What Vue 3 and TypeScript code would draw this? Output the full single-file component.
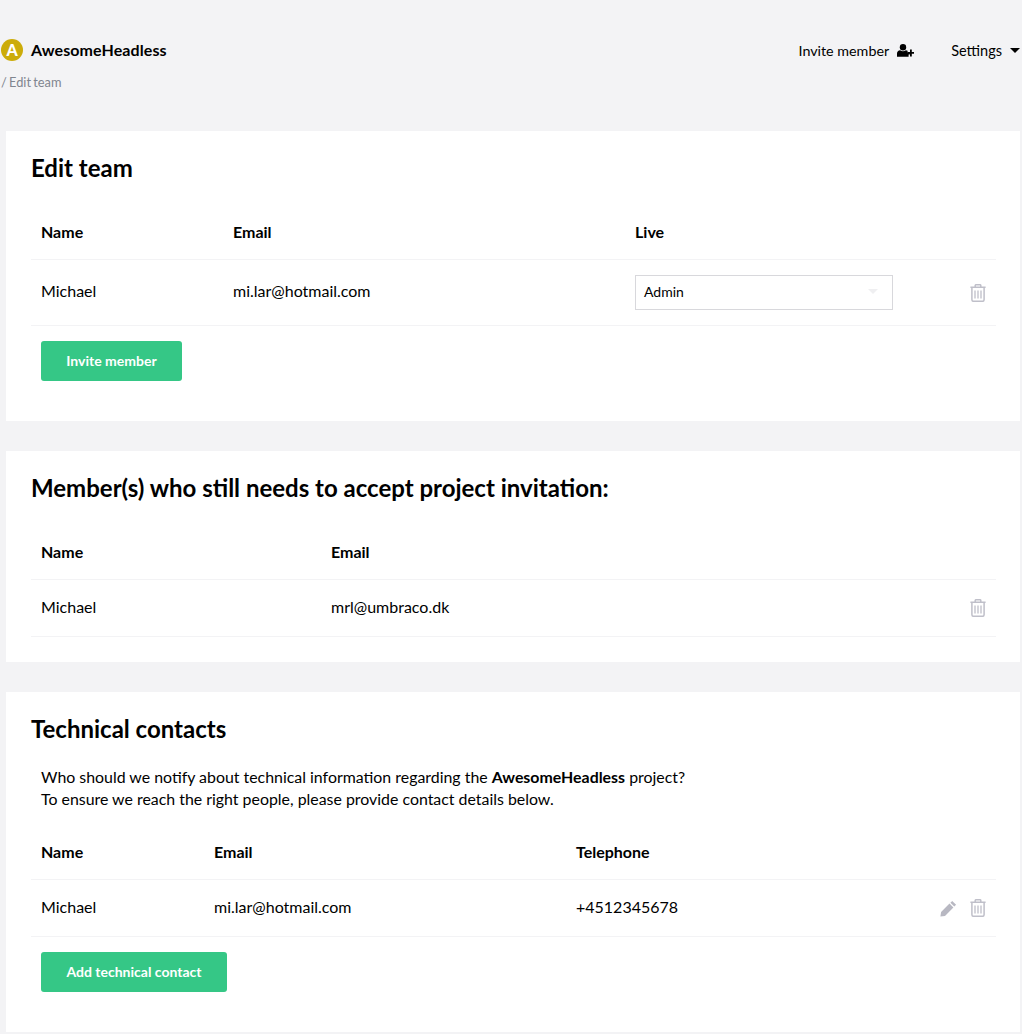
<script setup lang="ts">
const teamCols = '192px 402px 1fr 80px'
const inviteCols = '290px 1fr 80px'
const techCols = '173px 362px 1fr 80px'
</script>

<template>
  <div class="page">
    <header class="top">
      <div class="top-row">
        <div class="brand">
          <span class="logo">A</span>
          <span class="brand-name">AwesomeHeadless</span>
        </div>
        <nav class="nav">
          <span class="nav-item invite">
            Invite member
            <svg class="user-plus" width="17" height="13" viewBox="0 0 17 13">
              <circle cx="6" cy="3.300" r="3.200" fill="#000" />
              <path d="M0 12.800V9.600C0 7.600 1.400 6.200 3.100 6.200c.9.7 1.800 1 2.900 1s2-.3 2.900-1c.6 0 1.200.2 1.700.6v1.800h2.200v1.800h-1.200v2.400H1z" fill="#000" />
              <path d="M13 5.400h1.800v2.600H17v1.800h-2.200v2.600H13V9.800h-2.400V8H13z" fill="#000" />
            </svg>
          </span>
          <span class="nav-item settings">
            Settings
            <span class="caret"></span>
          </span>
        </nav>
      </div>
      <div class="crumb">/ Edit team</div>
    </header>

    <section class="card card-team">
      <h2>Edit team</h2>
      <div class="row head" :style="{ gridTemplateColumns: teamCols }">
        <span>Name</span><span>Email</span><span>Live</span><span></span>
      </div>
      <div class="row body tall" :style="{ gridTemplateColumns: teamCols }">
        <span>Michael</span>
        <span>mi.lar@hotmail.com</span>
        <div class="select"><span>Admin</span><i class="select-caret"></i></div>
        <div class="actions">
          <svg class="trash" width="16" height="18" viewBox="0 0 16 18">
            <path d="M5.200 3V1.600c0-.5.3-.9.9-.9h3.800c.6 0 .9.4.9.9V3M.4 3.300h15.200M1.900 3.500v11.900c0 1 .6 1.900 1.400 1.900h9.400c.8 0 1.400-.9 1.400-1.900V3.500" fill="none" stroke="#bfbfc9" stroke-width="1.500" />
            <path d="M5 6.500v8M8 6.500v8M11 6.500v8" fill="none" stroke="#bfbfc9" stroke-width="1.300" />
          </svg>
        </div>
      </div>
      <button class="btn invite-btn">Invite member</button>
    </section>

    <section class="card card-invite">
      <h2>Member(s) who still needs to accept project invitation:</h2>
      <div class="row head" :style="{ gridTemplateColumns: inviteCols }">
        <span>Name</span><span>Email</span><span></span>
      </div>
      <div class="row body" :style="{ gridTemplateColumns: inviteCols }">
        <span>Michael</span>
        <span>mrl@umbraco.dk</span>
        <div class="actions">
          <svg class="trash" width="16" height="18" viewBox="0 0 16 18">
            <path d="M5.200 3V1.600c0-.5.3-.9.9-.9h3.800c.6 0 .9.4.9.9V3M.4 3.300h15.200M1.900 3.500v11.900c0 1 .6 1.900 1.400 1.900h9.400c.8 0 1.400-.9 1.400-1.900V3.500" fill="none" stroke="#bfbfc9" stroke-width="1.500" />
            <path d="M5 6.500v8M8 6.500v8M11 6.500v8" fill="none" stroke="#bfbfc9" stroke-width="1.300" />
          </svg>
        </div>
      </div>
    </section>

    <section class="card card-tech">
      <h2>Technical contacts</h2>
      <p class="intro">
        Who should we notify about technical information regarding the <strong>AwesomeHeadless</strong> project?<br />
        To ensure we reach the right people, please provide contact details below.
      </p>
      <div class="row head" :style="{ gridTemplateColumns: techCols }">
        <span>Name</span><span>Email</span><span>Telephone</span><span></span>
      </div>
      <div class="row body" :style="{ gridTemplateColumns: techCols }">
        <span>Michael</span>
        <span>mi.lar@hotmail.com</span>
        <span>+4512345678</span>
        <div class="actions">
          <svg class="pencil" width="17" height="17" viewBox="0 0 17 17">
            <path d="M12.200.9 16.100 4.800 14.300 6.600 10.400 2.700zM9.500 3.600 13.400 7.500 5 15.900 0.400 16.600 1.100 12z" fill="#b8b8c2" />
          </svg>
          <svg class="trash" width="16" height="18" viewBox="0 0 16 18">
            <path d="M5.200 3V1.600c0-.5.3-.9.9-.9h3.800c.6 0 .9.4.9.9V3M.4 3.300h15.200M1.900 3.500v11.900c0 1 .6 1.900 1.400 1.900h9.400c.8 0 1.400-.9 1.400-1.900V3.500" fill="none" stroke="#bfbfc9" stroke-width="1.500" />
            <path d="M5 6.500v8M8 6.500v8M11 6.500v8" fill="none" stroke="#bfbfc9" stroke-width="1.300" />
          </svg>
        </div>
      </div>
      <button class="btn tech-btn">Add technical contact</button>
    </section>
  </div>
</template>

<style scoped>
.page {
  width: 1022px;
  height: 1034px;
  overflow: hidden;
  background: #f3f3f5;
  font-family: Lato, "Liberation Sans", sans-serif;
  color: #000;
  font-size: 16px;
  box-sizing: border-box;
}
.top {
  height: 131px;
  padding: 38px 2px 0 1px;
  box-sizing: border-box;
}
.top-row {
  display: flex;
  justify-content: space-between;
  align-items: center;
  height: 24px;
}
.brand {
  display: flex;
  align-items: center;
  gap: 8px;
}
.logo {
  width: 22px;
  height: 22px;
  border-radius: 50%;
  background: #ccac0a;
  color: #fff;
  font-weight: 900;
  font-size: 16px;
  line-height: 22px;
  text-align: center;
}
.brand-name {
  font-size: 16px;
  font-weight: 700;
  letter-spacing: 0.1px;
  padding-bottom: 2px;
}
.nav {
  display: flex;
  align-items: center;
}
.nav-item {
  display: flex;
  align-items: center;
  font-size: 14.500px;
}
.invite {
  gap: 8px;
  margin-right: 37px;
  font-size: 14.300px;
}
.settings {
  gap: 8px;
}
.caret {
  width: 0;
  height: 0;
  border-left: 5px solid transparent;
  border-right: 5px solid transparent;
  border-top: 5px solid #000;
}
.crumb {
  margin-top: 11px;
  font-size: 12.800px;
  word-spacing: -1px;
  color: #80858f;
  line-height: 18px;
}
.card {
  margin: 0 2px 30px 6px;
  padding: 0 24px 0 25px;
  background: #fff;
  box-sizing: border-box;
}
.card-team { height: 290px; }
.card-invite { height: 211px; }
.card-tech { height: 340px; }
h2 {
  margin: 0;
  padding-top: 22px;
  font-size: 24px;
  line-height: 30px;
  font-weight: 700;
}
.row {
  display: grid;
  align-items: center;
  padding-left: 10px;
  border-bottom: 1px solid #f3f3f5;
}
.head {
  height: 77px;
  padding-top: 20px;
  box-sizing: border-box;
  font-weight: 700;
}
.card-tech .head {
  height: 56px;
  padding-top: 0;
  margin-top: 14px;
}
.body {
  height: 57px;
  padding-bottom: 4px;
  box-sizing: border-box;
}
.tall {
  height: 66px;
}
.select {
  width: 258px;
  height: 35px;
  margin-top: 4px;
  box-sizing: border-box;
  border: 1px solid #d8d8dc;
  display: flex;
  align-items: center;
  justify-content: space-between;
  padding: 0 14px 2px 8px;
  font-size: 14px;
}
.select-caret {
  width: 0;
  height: 0;
  border-left: 5px solid transparent;
  border-right: 5px solid transparent;
  border-top: 5px solid #efeff1;
}
.actions {
  display: flex;
  justify-content: flex-end;
  align-items: center;
  gap: 13px;
  margin-top: 4px;
  padding-right: 10px;
}
.trash, .pencil { display: block; }
.btn {
  display: block;
  height: 40px;
  margin: 15px 0 0 10px;
  border: 0;
  border-radius: 3px;
  background: #35c786;
  color: #fff;
  font-family: inherit;
  font-weight: 700;
  font-size: 14px;
  padding: 0 0 2px;
}
.invite-btn { width: 141px; }
.tech-btn { width: 186px; }
.intro {
  margin: 22px 0 0 10px;
  line-height: 22px;
  font-size: 15.900px;
}
.intro strong { font-weight: 700; }
</style>
